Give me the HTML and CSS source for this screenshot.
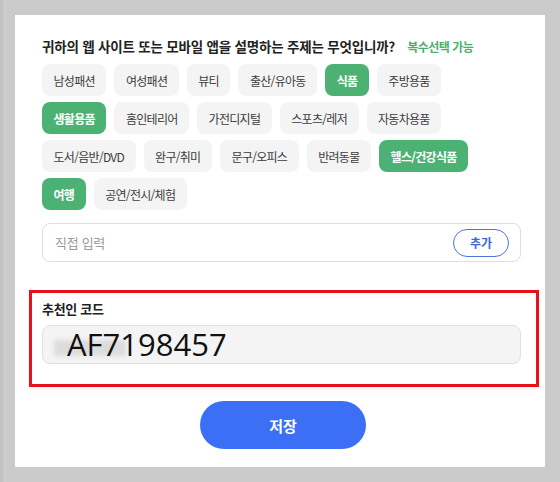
FILE: index.html
```html
<!DOCTYPE html>
<html lang="ko">
<head>
<meta charset="utf-8">
<link rel="stylesheet" href="styles.css">
</head>
<body>
<div class="frame">
  <div class="card">
    <div class="title-row">
      <span class="title">귀하의 웹 사이트 또는 모바일 앱을 설명하는 주제는 무엇입니까?</span>
      <span class="multi">복수선택 가능</span>
    </div>
    <div class="chips">
      <span class="chip">남성패션</span>
      <span class="chip">여성패션</span>
      <span class="chip">뷰티</span>
      <span class="chip">출산/유아동</span>
      <span class="chip on">식품</span>
      <span class="chip">주방용품</span>
      <span class="chip on">생활용품</span>
      <span class="chip">홈인테리어</span>
      <span class="chip">가전디지털</span>
      <span class="chip">스포츠/레저</span>
      <span class="chip">자동차용품</span>
      <span class="chip">도서/음반/DVD</span>
      <span class="chip">완구/취미</span>
      <span class="chip">문구/오피스</span>
      <span class="chip">반려동물</span>
      <span class="chip on">헬스/건강식품</span>
      <span class="chip on">여행</span>
      <span class="chip">공연/전시/체험</span>
    </div>
    <div class="custom">
      <span class="placeholder">직접 입력</span>
      <span class="add">추가</span>
    </div>
    <div class="referral">
      <div class="ref-label">추천인 코드</div>
      <div class="code-box">
        <span class="smudge"></span>
        <span class="code">AF7198457</span>
      </div>
    </div>
    <div class="save-row">
      <span class="save">저장</span>
    </div>
  </div>
</div>
</body>
</html>
```

FILE: styles.css
```css
* { box-sizing: border-box; }
html, body { margin: 0; padding: 0; }
body {
  background: #cbcbcb;
  font-family: "Noto Sans CJK KR", "Noto Sans", sans-serif;
  width: 560px;
  height: 482px;
  overflow: hidden;
}
.frame {
  height: 482px;
  border-left: 3px solid #c2c2c2;
  padding: 15px 15px 15px 12px;
}
.card {
  background: #ffffff;
  width: 530px;
  height: 452px;
  padding: 22px 24px 0 27px;
  display: flex;
  flex-direction: column;
}
.title-row {
  display: flex;
  align-items: center;
  gap: 12px;
  height: 18px;
}
.title {
  font-size: 13.5px;
  font-weight: 700;
  color: #222;
  letter-spacing: -0.2px;
}
.multi {
  font-size: 12px;
  font-weight: 700;
  color: #4caf6e;
  letter-spacing: -0.5px;
}
.chips {
  margin-top: 9px;
  margin-right: 16px;
  display: flex;
  flex-wrap: wrap;
  gap: 6px 8px;
}
.chip {
  height: 32px;
  padding: 0 11.5px;
  display: flex;
  align-items: center;
  border-radius: 8px;
  background: #f4f4f4;
  color: #3c3c3c;
  font-size: 12px;
  letter-spacing: -0.7px;
}
.chip.on {
  background: #4cb273;
  color: #fff;
  font-weight: 700;
}
.custom {
  margin-top: 13px;
  height: 39px;
  border: 1px solid #dedede;
  border-radius: 8px;
  display: flex;
  align-items: center;
  justify-content: space-between;
  padding: 0 11px 0 12px;
}
.placeholder {
  font-size: 13px;
  color: #9a9a9a;
  letter-spacing: -0.3px;
}
.add {
  width: 56px;
  height: 28px;
  border: 1.5px solid #4a74e0;
  border-radius: 14px;
  display: flex;
  align-items: center;
  justify-content: center;
  font-size: 12px;
  font-weight: 700;
  color: #3e67d2;
}
.referral {
  margin: 28px -18px 0 -13px;
  border: 3px solid #e8101a;
  padding: 7px 15px 20px 10px;
  box-shadow: 0 4px 8px rgba(0,0,0,0.04);
}
.ref-label {
  font-size: 13px;
  font-weight: 700;
  color: #222;
  letter-spacing: -0.3px;
  height: 18px;
  line-height: 18px;
}
.code-box {
  position: relative;
  margin-top: 7px;
  height: 39px;
  background: #f4f4f4;
  border: 1px solid #e0e0e0;
  border-radius: 8px;
  display: flex;
  align-items: center;
  padding-left: 24px;
}
.smudge {
  position: absolute;
  left: 11px;
  top: 14px;
  width: 72px;
  height: 16px;
  background: #dcdcdc;
  filter: blur(2px);
}
.code {
  position: relative;
  font-family: "Open Sans", "Noto Sans", sans-serif;
  font-size: 31px;
  color: #111;
  line-height: 39px;
}
.save-row {
  margin-top: 14px;
  display: flex;
  justify-content: center;
  padding-left: 3px;
}
.save {
  width: 166px;
  height: 48px;
  border-radius: 24px;
  background: #3a6ff6;
  color: #fff;
  font-size: 15px;
  font-weight: 700;
  display: flex;
  align-items: center;
  justify-content: center;
}
```
